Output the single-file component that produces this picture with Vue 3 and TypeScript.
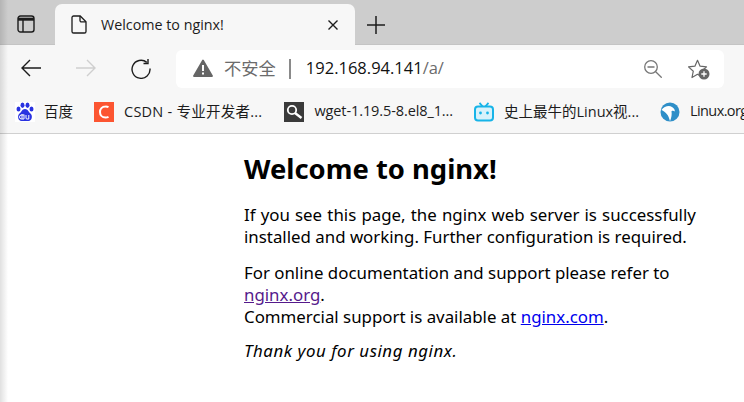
<template>
  <div class="browser">
    <div class="edge-shadow" aria-hidden="true"></div>
    <header class="tab-strip">
      <button type="button" class="strip-btn tabs-btn" aria-label="Tabs">
        <svg width="18" height="18" viewBox="0 0 18 18" fill="none" stroke="#1c1c1c">
          <rect x="1" y="1" width="16" height="16" rx="2.500" stroke-width="1.400" />
          <path d="M1 4.200h16" stroke-width="3" />
          <path d="M6 5v12" stroke-width="1.400" />
        </svg>
      </button>
      <div class="tab">
        <svg class="tab-file" width="16" height="19" viewBox="0 0 16 19" fill="none" stroke="#1c1c1c" stroke-width="1.300">
          <path d="M2.600 1h6.600L15 6.800v9.600a1.600 1.600 0 0 1-1.600 1.600H2.600A1.600 1.600 0 0 1 1 16.400V2.600A1.600 1.600 0 0 1 2.600 1z" />
          <path d="M9 1v4.400a1.500 1.500 0 0 0 1.500 1.500H15" />
        </svg>
        <span class="tab-title">Welcome to nginx!</span>
        <svg class="tab-close" width="10" height="10" viewBox="0 0 10 10" stroke="#1c1c1c" stroke-width="1.400">
          <path d="M.5.500l9 9M9.500.500l-9 9" />
        </svg>
      </div>
      <svg class="new-tab" width="18" height="18" viewBox="0 0 18 18" stroke="#1c1c1c" stroke-width="1.500">
        <path d="M9 0v18M0 9h18" />
      </svg>
    </header>

    <nav class="toolbar">
      <svg class="nav-back" width="20" height="18" viewBox="0 0 20 18" fill="none" stroke="#1c1c1c" stroke-width="1.400">
        <path d="M20 9H1M9 1L1 9l8 8" />
      </svg>
      <svg class="nav-forward" width="20" height="18" viewBox="0 0 20 18" fill="none" stroke="#cfcfcf" stroke-width="1.400">
        <path d="M0 9h19M11 1l8 8-8 8" />
      </svg>
      <svg class="nav-reload" width="20" height="20" viewBox="0 0 20 20" fill="none" stroke="#1c1c1c" stroke-width="1.400">
        <path d="M19 9.500A9 9 0 1 1 15.800 3.400" />
        <path d="M17 0v4.500h-4.500" />
      </svg>

      <div class="address">
        <svg class="warn" width="20" height="18" viewBox="0 0 20 18">
          <path d="M10 1.500L19 17H1z" fill="#666" stroke="#666" stroke-width="1.800" stroke-linejoin="round" />
          <path d="M9 6h2v6H9zM9 13.500h2v2H9z" fill="#fff" />
        </svg>
        <span class="not-secure">不安全</span>
        <span class="sep"></span>
        <span class="url">192.168.94.141<span class="url-path">/a/</span></span>
        <svg class="zoom-out" width="18" height="18" viewBox="0 0 18 18" fill="none" stroke="#777" stroke-width="1.300">
          <circle cx="7" cy="7" r="6.300" />
          <path d="M11.700 11.700l6 6M3.500 7h7" />
        </svg>
        <svg class="fav" width="22" height="21" viewBox="0 0 22 21">
          <path d="M9.500 1.300l2.600 5.900 6.400.7-4.800 4.300 1.300 6.300-5.500-3.200L4 18.500l1.300-6.300L.5 7.900l6.400-.7z" fill="#fff" stroke="#666" stroke-width="1.200" stroke-linejoin="round" />
          <circle cx="16" cy="15" r="5.500" fill="#666" />
          <path d="M16 12.300v5.400M13.300 15h5.400" stroke="#fff" stroke-width="1.300" />
        </svg>
      </div>
    </nav>

    <div class="bookmarks">
      <a class="bookmark bm-baidu">
        <svg width="20" height="20" viewBox="0 0 20 20">
          <rect width="20" height="20" fill="#fff" />
          <g fill="#2932e1">
            <ellipse cx="3.500" cy="7" rx="2" ry="2.600" />
            <ellipse cx="7.500" cy="3.200" rx="2" ry="2.700" />
            <ellipse cx="12.500" cy="3.200" rx="2" ry="2.700" />
            <ellipse cx="16.500" cy="7" rx="2" ry="2.600" />
            <path d="M10 7c3 0 3.500 3 5.500 4.500 2.500 2 1.500 7.500-2 7.500H6.500c-3.500 0-4.500-5.500-2-7.500C6.500 10 7 7 10 7z" />
          </g>
          <path d="M7 12v5M9 12.500v4.500H6.500a2 2 0 0 1 0-4H9M11 13v3a1 1 0 0 0 1 1h1.800v-4" fill="none" stroke="#fff" stroke-width="1" />
        </svg>
        <span>百度</span>
      </a>
      <a class="bookmark bm-csdn">
        <svg width="20" height="20" viewBox="0 0 20 20">
          <rect width="20" height="20" fill="#fc5531" />
          <path d="M14.500 5.200A6 6 0 0 0 11.500 4.500c-3.500 0-5.500 2.400-5.500 5.500s2 5.500 5.500 5.500a6 6 0 0 0 3-.7" fill="none" stroke="#fff" stroke-width="2" />
        </svg>
        <span>CSDN - 专业开发者...</span>
      </a>
      <a class="bookmark bm-wget">
        <svg width="20" height="20" viewBox="0 0 20 20">
          <rect width="20" height="20" fill="#3a3a3a" />
          <circle cx="8" cy="8" r="4.200" fill="none" stroke="#fff" stroke-width="1.800" />
          <path d="M11 11l6.500 5" stroke="#fff" stroke-width="2.400" />
        </svg>
        <span>wget-1.19.5-8.el8_1...</span>
      </a>
      <a class="bookmark bm-bili">
        <svg width="20" height="20" viewBox="0 0 20 20" fill="none">
          <rect x="1" y="4.500" width="18" height="14" rx="3" stroke="#17b4e8" stroke-width="2" fill="#d8f2fb" />
          <path d="M5.500.8l3 3.500M14.500.8l-3 3.500" stroke="#17b4e8" stroke-width="1.800" />
          <circle cx="6.500" cy="11" r="1.400" fill="#17b4e8" />
          <circle cx="13.500" cy="11" r="1.400" fill="#17b4e8" />
        </svg>
        <span>史上最牛的Linux视...</span>
      </a>
      <a class="bookmark bm-linux">
        <svg width="20" height="20" viewBox="0 0 20 20">
          <circle cx="10" cy="10" r="9.500" fill="#2f8fc8" />
          <path d="M1.500 8C4 4.500 9 3 12 5c2 1 3 3 2.800 4.500-1.200-.8-2.300-.8-3.300-.2.500 3 0 6-1.500 10-1-3-1.500-6-3.500-7.500C5.500 10.500 3.500 9 1.500 8z" fill="#fff" />
        </svg>
        <span>Linux.org</span>
      </a>
    </div>

    <main class="page">
      <h1>Welcome to nginx!</h1>
      <p><span class="wide">If you see this page, the nginx web server is successfully</span> installed and working. Further configuration is required.</p>
      <p class="support">For online documentation and support please refer to <a class="visited">nginx.org</a>.<br />Commercial support is available at <a class="link">nginx.com</a>.</p>
      <p><em>Thank you for using nginx.</em></p>
    </main>
  </div>
</template>

<script setup lang="ts">
</script>

<style>
html,
body {
  margin: 0;
  overflow: hidden;
  background: #fff;
}
</style>

<style scoped>
.browser {
  position: relative;
  width: 744px;
  height: 402px;
  overflow: hidden;
  font-family: "Open Sans", "Noto Sans CJK SC", sans-serif;
  color: #1c1c1c;
}

.edge-shadow {
  position: absolute;
  top: 0;
  bottom: 0;
  left: 0;
  width: 8px;
  background: linear-gradient(to right, rgba(0, 0, 0, 0.12), rgba(0, 0, 0, 0));
}

.tab-strip {
  display: flex;
  align-items: flex-end;
  height: 45px;
  padding-left: 8px;
  box-sizing: border-box;
  background: #cdcdcd;
  border-bottom: 1px solid #c4c4c4;
}

.strip-btn {
  border: none;
  background: none;
  display: flex;
  width: 47px;
  height: 40px;
  align-items: center;
  padding: 0 0 0 9px;
  box-sizing: border-box;
}

.tab {
  display: flex;
  align-items: center;
  width: 300px;
  height: 41px;
  margin-bottom: -1px;
  box-sizing: border-box;
  padding: 0 16px;
  background: #f7f7f7;
  border-radius: 7px 7px 0 0;
}

.tab-title {
  margin-left: 14px;
  font-size: 14.300px;
  flex: 1;
}

.new-tab {
  margin: 0 0 10px 12px;
}

.tab-close {
  margin-right: 1px;
}

.toolbar {
  display: flex;
  align-items: center;
  height: 45px;
  background: #f7f7f7;
  padding: 3px 0 0 21px;
  box-sizing: border-box;
}

.nav-back {
  margin-top: -2px;
}

.nav-forward {
  margin: -2px 0 0 35px;
}

.nav-reload {
  margin-left: 35px;
}

.address {
  display: flex;
  align-items: center;
  width: 548px;
  height: 38px;
  margin-left: 25px;
  padding: 0 14px 0 17px;
  box-sizing: border-box;
  background: #fff;
  border-radius: 6px;
}

.warn {
  margin-top: -2px;
}

.not-secure {
  margin: 0 0 3px 11px;
  font-size: 17.300px;
  color: #6b6b6b;
}

.sep {
  width: 2px;
  height: 20px;
  margin-left: 13px;
  background: #8a8a8a;
}

.url {
  margin: 0 0 3px 15px;
  font-size: 16.500px;
  color: #111;
  flex: 1;
}

.url-path {
  color: #6b6b6b;
}

.fav {
  margin-left: 26px;
}

.bookmarks {
  display: flex;
  align-items: center;
  height: 44px;
  background: #f7f7f7;
  border-bottom: 1px solid #d0d0d0;
  box-sizing: border-box;
  padding-left: 15px;
  white-space: nowrap;
  overflow: hidden;
}

.bookmark {
  display: flex;
  flex: none;
  align-items: center;
  gap: 10px;
  font-size: 14.500px;
  color: #1c1c1c;
}

.bookmark span {
  margin-bottom: 2px;
}

.bm-baidu {
  gap: 9px;
}

.bm-csdn {
  margin-left: 21px;
  letter-spacing: 0.25px;
}

.bm-wget {
  margin-left: 22px;
  letter-spacing: -0.1px;
}

.bm-bili {
  margin-left: 21px;
}

.bm-linux {
  margin-left: 21px;
  letter-spacing: -0.6px;
}

.page {
  padding: 0 0 0 244px;
  width: 700px;
  box-sizing: border-box;
  font-family: "Noto Sans", sans-serif;
  font-size: 16.850px;
  line-height: 22px;
  color: #000;
}

h1 {
  margin: 19px 0 19px;
  font-size: 27.400px;
  line-height: 32px;
  font-weight: 700;
}

p {
  margin: 0 0 14px;
  width: 470px;
}

.wide {
  word-spacing: 0.8px;
}

.support {
  margin-bottom: 12px;
}

em {
  letter-spacing: 0.55px;
}

.visited {
  color: #551a8b;
  text-decoration: underline;
}

.link {
  color: #0000ee;
  text-decoration: underline;
}
</style>
